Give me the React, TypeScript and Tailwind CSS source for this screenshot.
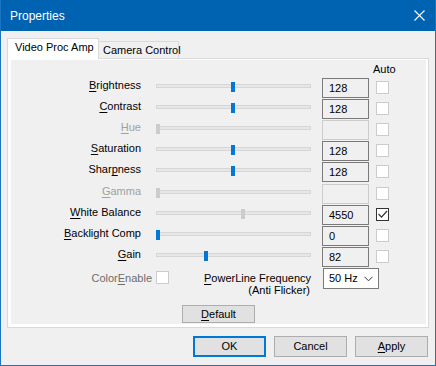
import React from 'react';

type Row = {
  label: string;
  key: number;
  value: string;
  pos: number;
  disabled?: boolean;
  thumbGray?: boolean;
  auto?: boolean;
  extraTop?: boolean;
};

const rows: Row[] = [
  { label: 'Brightness', key: 0, value: '128', pos: 75 },
  { label: 'Contrast', key: 0, value: '128', pos: 75 },
  { label: 'Hue', key: 0, value: '', pos: 0, disabled: true },
  { label: 'Saturation', key: 0, value: '128', pos: 75 },
  { label: 'Sharpness', key: 4, value: '128', pos: 75 },
  { label: 'Gamma', key: 0, value: '', pos: 0, disabled: true, extraTop: true },
  { label: 'White Balance', key: 0, value: '4550', pos: 85, thumbGray: true, auto: true },
  { label: 'Backlight Comp', key: 0, value: '0', pos: 0 },
  { label: 'Gain', key: 0, value: '82', pos: 48 },
];

function Accel({ text, at }: { text: string; at: number }) {
  return (
    <>
      {text.slice(0, at)}
      <span className="underline decoration-1 underline-offset-[2px]">{text[at]}</span>
      {text.slice(at + 1)}
    </>
  );
}

function Checkbox({ checked }: { checked?: boolean }) {
  return (
    <div className={`h-[13px] w-[13px] border bg-white ${checked ? 'border-[#333333]' : 'border-[#cccccc]'}`}>
      {checked && (
        <svg width="11" height="11" viewBox="0 0 11 11" className="block">
          <polyline points="1.5,5 4.5,8.2 10,2" fill="none" stroke="#333333" strokeWidth="1.2" />
        </svg>
      )}
    </div>
  );
}

function SliderRow({ row }: { row: Row }) {
  const thumbColor = row.disabled || row.thumbGray ? 'bg-[#cccccc]' : 'bg-[#0078d7]';
  return (
    <div className={`flex h-[21px] items-start ${row.extraTop ? 'mt-px' : ''}`}>
      <div className={`w-[130px] pt-px text-right leading-[13px] ${row.disabled ? 'text-[#a0a0a0]' : 'text-black'}`}>
        <Accel text={row.label} at={row.key} />
      </div>
      <div className="relative ml-[15px] h-[20px] w-[155px]">
        <div className="mt-[6px] h-[4px] border border-[#d6d6d6] bg-[#e7e7e7]" />
        <div className={`absolute top-[4px] h-[10px] w-[4px] ${thumbColor}`} style={{ left: row.pos }} />
      </div>
      <div
        className={`ml-[11px] h-[20px] w-[47px] border pl-[6px] leading-[18px] ${
          row.disabled ? 'border-[#cccccc]' : 'border-[#7a7a7a]'
        }`}
      >
        {row.value}
      </div>
      <div className="ml-[7px] mt-[3px]">
        <Checkbox checked={row.auto} />
      </div>
    </div>
  );
}

export default function App() {
  return (
    <div className="flex h-[366px] w-[436px] flex-col whitespace-nowrap border-x border-b border-[#1a73c3] bg-[#f0f0f0] font-['Liberation_Sans',Arial,sans-serif] text-[11px] text-black">
      {/* title bar */}
      <div className="flex h-[31px] shrink-0 items-center justify-between bg-[#0063b1] pl-[9px] pr-[10px] text-[12px] text-white">
        <span>Properties</span>
        <svg width="11" height="11" viewBox="0 0 11 11">
          <path d="M0.5 0.5 L10.5 10.5 M10.5 0.5 L0.5 10.5" stroke="white" strokeWidth="1.1" />
        </svg>
      </div>

      <div className="px-[6px] pt-[7px]">
        {/* tabs */}
        <div className="flex h-[20px] items-end">
          <div className="relative z-10 -mb-px h-[21px] w-[92px] border-x border-t border-[#d9d9d9] bg-white pl-[7px] pt-[2px] leading-[13px]">
            Video Proc Amp
          </div>
          <div className="h-[17px] w-[80px] border-r border-t border-[#d9d9d9] bg-[#f0f0f0] pl-[4px] pt-[2px] leading-[13px]">
            Camera Control
          </div>
        </div>

        {/* tab page */}
        <div className="h-[270px] w-[422px] border border-[#d9d9d9] bg-white pb-[3px] pl-[3px] pr-[2px] pt-px">
          <div className="h-full bg-[#f0f0f0]">
            <div className="h-[18px] pl-[362px] pt-[3px] leading-[13px]">Auto</div>

            {rows.map((row) => (
              <SliderRow key={row.label} row={row} />
            ))}

            {/* color enable / powerline */}
            <div className="flex h-[21px] items-start">
              <div className="w-[141px] pt-[4px] text-right leading-[13px] text-[#6d6d6d]">
                <Accel text="ColorEnable" at={5} />
              </div>
              <div className="ml-[4px] mt-[3px]">
                <Checkbox />
              </div>
              <div className="ml-[35px] w-[106px] pt-[4px] text-right leading-[12px]">
                <div className="pr-[3px]">
                  <Accel text="PowerLine Frequency" at={0} />
                </div>
                <div>(Anti Flicker)</div>
              </div>
              <div className="ml-[13px] flex h-[21px] w-[56px] items-center justify-between border border-[#7a7a7a] bg-white pl-[5px] pr-[5px]">
                <span>50 Hz</span>
                <svg width="9" height="6" viewBox="0 0 9 6">
                  <polyline points="0.5,0.8 4.5,4.8 8.5,0.8" fill="none" stroke="#333333" strokeWidth="1" />
                </svg>
              </div>
            </div>

            <div className="mt-[16px] pl-[171px]">
              <div className="flex h-[18px] w-[73px] items-center justify-center border border-[#adadad] bg-[#e1e1e1]">
                <Accel text="Default" at={0} />
              </div>
            </div>
          </div>
        </div>

        {/* dialog buttons */}
        <div className="mt-[8px] flex justify-end gap-[8px] pr-[1px]">
          <div className="flex h-[21px] w-[73px] items-center justify-center border-2 border-[#0078d7] bg-[#e1e1e1]">OK</div>
          <div className="flex h-[21px] w-[73px] items-center justify-center border border-[#adadad] bg-[#e1e1e1]">Cancel</div>
          <div className="flex h-[21px] w-[73px] items-center justify-center border border-[#adadad] bg-[#e1e1e1]">
            <Accel text="Apply" at={0} />
          </div>
        </div>
      </div>
    </div>
  );
}
